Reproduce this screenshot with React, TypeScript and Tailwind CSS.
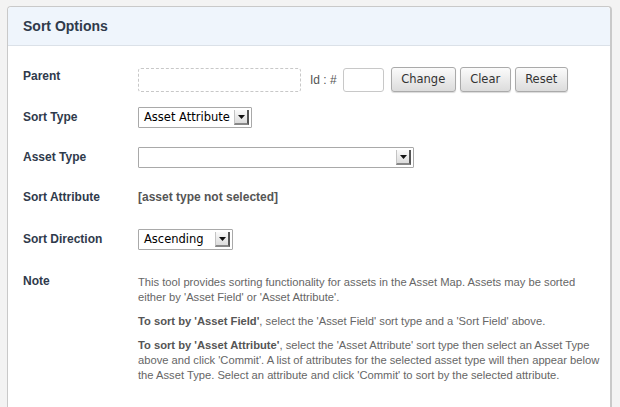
import React from "react"

const labelCls = "w-[115px] shrink-0 text-[12px] font-bold text-[#2f3a4b]"
const ctrlFont = { fontFamily: '"DejaVu Sans", "Liberation Sans", sans-serif' }

function Arrow() {
  return (
    <div className="absolute right-[2px] top-[2px] bottom-[2px] w-[15px] bg-gradient-to-b from-[#fafafa] to-[#dcdcdc] border-l border-[#c4c4c4] border-r-2 border-r-[#555] border-b-2 border-b-[#888] flex items-center justify-center">
      <svg width="7" height="4" viewBox="0 0 7 4">
        <path d="M0 0 L7 0 L3.5 4 Z" fill="#111" />
      </svg>
    </div>
  )
}

function FakeSelect({ value, width }: { value: string; width: string }) {
  return (
    <div
      className={`relative h-[21px] ${width} border border-[#a9a9a9] bg-white rounded-[1px] text-[11.5px] leading-[19px] pl-[5px] text-black`}
      style={ctrlFont}
    >
      {value}
      <Arrow />
    </div>
  )
}

function Btn({ children, width }: { children: React.ReactNode; width: string }) {
  return (
    <button
      className={`h-[25px] ${width} rounded-[3px] border border-[#aaa] bg-gradient-to-b from-[#fbfbfb] to-[#dcdcdc] text-[11.5px] text-[#333] shadow-[0_1px_1px_rgba(0,0,0,0.15)]`}
      style={ctrlFont}
    >
      {children}
    </button>
  )
}

export default function App() {
  return (
    <div
      className="w-[620px] h-[407px] overflow-hidden bg-[#f3f3f3] pl-[7px] pt-[6px]"
      style={{ fontFamily: '"Liberation Sans", Arial, sans-serif' }}
    >
      <div className="w-[605px] h-[420px] bg-white border border-[#c9c9c9] border-r-2 rounded-t-[4px]">
        <div className="h-[39px] bg-[#eff5fc] border-b border-[#dbe1e8] rounded-t-[4px] pl-[15px] flex items-center">
          <h1 className="text-[14px] font-bold text-[#2f3a4b] pt-[1px]">Sort Options</h1>
        </div>

        <div className="pl-[15px] pt-[21px]">
          {/* Parent */}
          <div className="flex items-start h-[25px]">
            <div className={labelCls}>Parent</div>
            <div className="flex items-center">
              <div className="w-[163px] h-[24px] border border-dashed border-[#c8c8c8] rounded-[3px]" />
              <span className="ml-[9px] text-[12px] text-[#555]">Id : #</span>
              <div className="ml-[6px] w-[41px] h-[24px] border border-[#c8c8c8] rounded-[3px] bg-white" />
              <div className="ml-[7px] flex gap-[4px]">
                <Btn width="w-[65px]">Change</Btn>
                <Btn width="w-[51px]">Clear</Btn>
                <Btn width="w-[53px]">Reset</Btn>
              </div>
            </div>
          </div>

          {/* Sort Type */}
          <div className="flex items-start mt-[15px]">
            <div className={`${labelCls} pt-[1px]`}>Sort Type</div>
            <FakeSelect value="Asset Attribute" width="w-[114px]" />
          </div>

          {/* Asset Type */}
          <div className="flex items-start mt-[19px]">
            <div className={`${labelCls} pt-[1px]`}>Asset Type</div>
            <FakeSelect value="" width="w-[276px]" />
          </div>

          {/* Sort Attribute */}
          <div className="flex items-center mt-[18px] h-[21px]">
            <div className={labelCls}>Sort Attribute</div>
            <div className="text-[12px] font-bold text-[#555]">[asset type not selected]</div>
          </div>

          {/* Sort Direction */}
          <div className="flex items-start mt-[22px]">
            <div className={`${labelCls} pt-[1px]`}>Sort Direction</div>
            <FakeSelect value="Ascending" width="w-[95px]" />
          </div>

          {/* Note */}
          <div className="flex items-start mt-[22px]">
            <div className={labelCls}>Note</div>
            <div className="text-[11.2px] leading-[15px] text-[#666] whitespace-nowrap pt-[3px]">
              <p>
                This tool provides sorting functionality for assets in the Asset Map. Assets may be sorted
                <br />
                either by 'Asset Field' or 'Asset Attribute'.
              </p>
              <p className="mt-[9px]">
                <b className="text-[#555]">To sort by 'Asset Field'</b>, select the 'Asset Field' sort type and a 'Sort Field' above.
              </p>
              <p className="mt-[9px]">
                <b className="text-[#555]">To sort by 'Asset Attribute'</b>, select the 'Asset Attribute' sort type then select an Asset Type
                <br />
                above and click 'Commit'. A list of attributes for the selected asset type will then appear below
                <br />
                the Asset Type. Select an attribute and click 'Commit' to sort by the selected attribute.
              </p>
            </div>
          </div>
        </div>
      </div>
    </div>
  )
}
